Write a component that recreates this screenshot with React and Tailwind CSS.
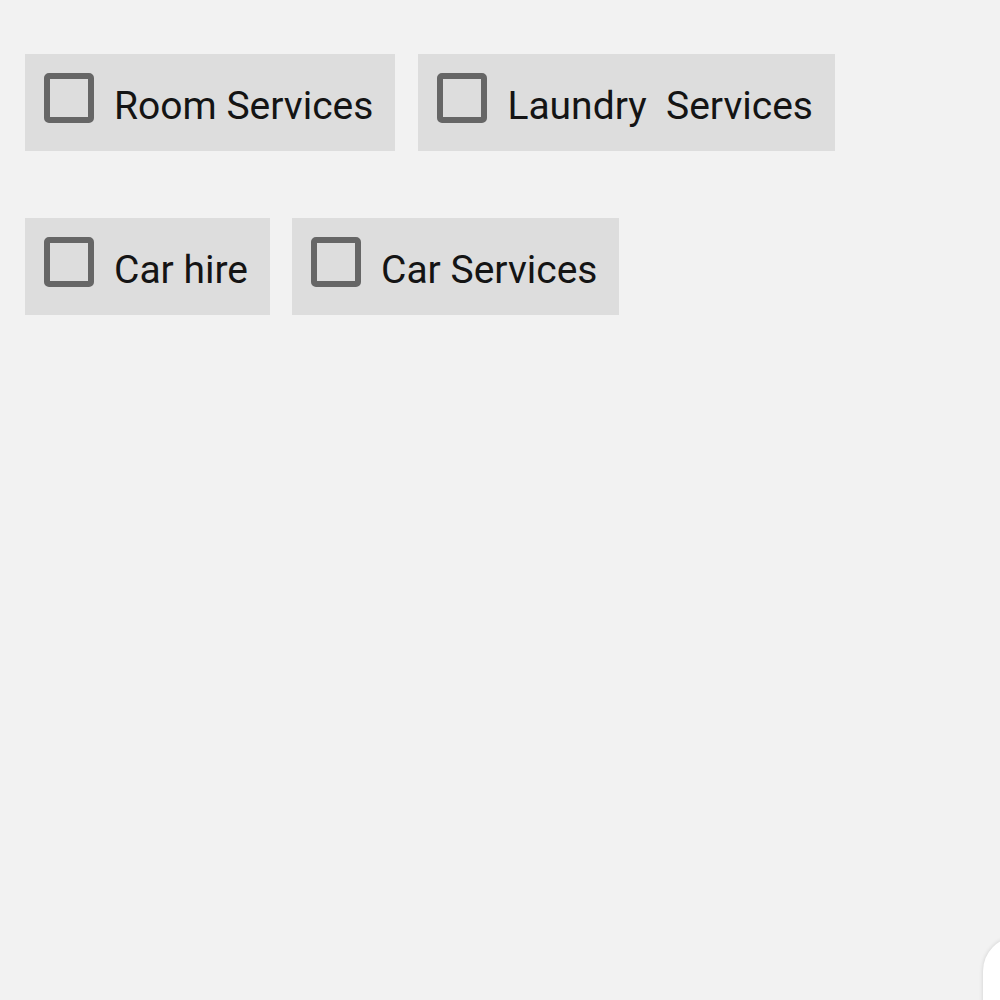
import React from "react";

function Chip({ label }) {
  return (
    <div className="flex items-start h-[97px] bg-[#dddddd] pl-[19px] pr-[22px]">
      <div className="mt-[19px] w-[50px] h-[50px] border-[6px] border-[#666666] rounded-[5px] shrink-0" />
      <span
        className="ml-[20px] pt-[33px] text-[39px] text-[#141414] whitespace-pre leading-none"
        style={{ fontFamily: "Roboto, 'Noto Sans', sans-serif" }}
      >
        {label}
      </span>
    </div>
  );
}

export default function App() {
  return (
    <div className="relative w-[1000px] h-[1000px] bg-[#f2f2f2] overflow-hidden">
      <div className="flex flex-col gap-[67px] pt-[54px] pl-[25px]">
        <div className="flex gap-[23px]">
          <Chip label="Room Services" />
          <Chip label="Laundry  Services" />
        </div>
        <div className="flex gap-[22px]">
          <Chip label="Car hire" />
          <Chip label="Car Services" />
        </div>
      </div>
      <div className="absolute left-[983px] top-[937px] w-[120px] h-[120px] rounded-[34px] bg-white shadow-[0_0_4px_rgba(0,0,0,0.15)]" />
    </div>
  );
}
